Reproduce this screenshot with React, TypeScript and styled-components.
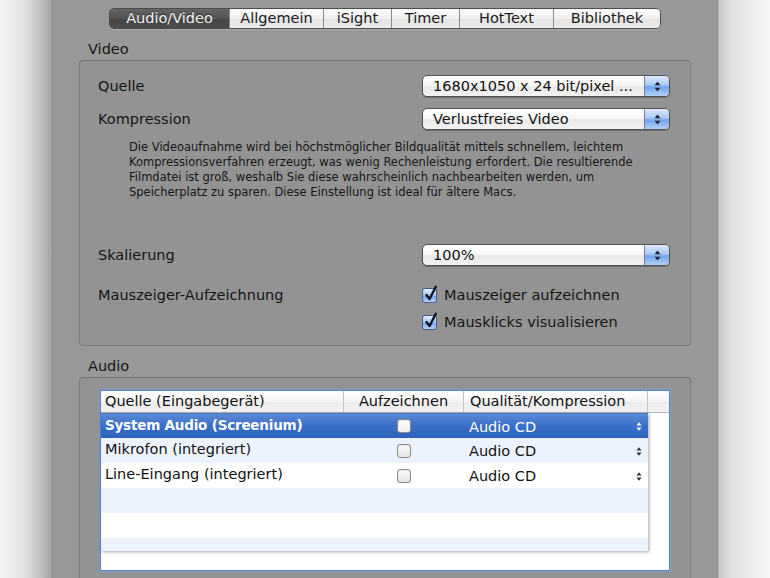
import React from 'react';
import styled, { createGlobalStyle } from 'styled-components';

const GlobalStyle = createGlobalStyle`
  html, body {
    margin: 0;
    height: 100%;
    overflow: hidden;
  }
  body {
    font-family: 'DejaVu Sans', 'Liberation Sans', sans-serif;
    color: #151515;
    background: linear-gradient(
      to right,
      #f4f4f4 0px,
      #e2e2e2 24px,
      #bdbdbd 42px,
      #a2a2a2 52px,
      #9a9a9a 53px,
      #9a9a9a 717px,
      #c6c6c6 719px,
      #e2e2e2 732px,
      #f6f6f6 770px
    );
  }
`;

const Window = styled.div`
  margin: 0 52px;
  height: 578px;
  box-sizing: border-box;
  padding: 8px 26px 0;
  background: #989898;
  border-left: 1px solid #8c8c8c;
  border-right: 1px solid #8c8c8c;
  overflow: hidden;
`;

const TabBar = styled.div`
  width: fit-content;
  margin: 0 auto;
  display: flex;
  height: 21px;
  box-sizing: border-box;
  border: 1px solid #4c4c4c;
  border-radius: 5px;
  overflow: hidden;
  box-shadow: 0 1px 0 rgba(255, 255, 255, 0.18);
`;

const Tab = styled.div<{ $active?: boolean; $w: number }>`
  width: ${({ $w }) => $w}px;
  flex-shrink: 0;
  box-sizing: border-box;
  text-align: center;
  font-size: 14.5px;
  line-height: 19px;
  white-space: nowrap;
  border-left: 1px solid ${({ $active }) => ($active ? '#3a3a3a' : '#8a8a8a')};
  &:first-child {
    border-left: none;
  }
  color: ${({ $active }) => ($active ? '#f4f4f4' : '#1a1a1a')};
  background: ${({ $active }) =>
    $active
      ? 'linear-gradient(#656565, #525252 50%, #444444 51%, #4d4d4d)'
      : 'linear-gradient(#fbfbfb, #efefef 50%, #e3e3e3 51%, #ececec)'};
  text-shadow: ${({ $active }) => ($active ? '0 -1px 0 rgba(0,0,0,0.5)' : 'none')};
`;

const GroupTitle = styled.div<{ $top: number }>`
  margin: ${({ $top }) => $top}px 0 3px 9px;
  font-size: 14.5px;
  line-height: 16px;
`;

const GroupBox = styled.div`
  border: 1px solid #7b7b7b;
  border-top-color: #727272;
  border-radius: 4px;
  background: #939393;
  padding: 14px 20px 14px 18px;
`;

const AudioBox = styled(GroupBox)`
  padding: 12px 20px 0 20px;
  height: 230px;
`;

const FormRow = styled.div<{ $top?: number }>`
  display: grid;
  grid-template-columns: 1fr 248px;
  align-items: center;
  margin-top: ${({ $top }) => $top ?? 0}px;
`;

const CheckRowGrid = styled(FormRow)`
  align-items: start;
`;

const Label = styled.div`
  font-size: 14.5px;
  line-height: 18px;
  white-space: nowrap;
`;

const Popup = styled.div`
  height: 22px;
  box-sizing: border-box;
  display: flex;
  border: 1px solid #505050;
  border-radius: 5px;
  overflow: hidden;
  background: linear-gradient(#ffffff, #f7f7f7 45%, #e9e9e9 55%, #f2f2f2);
  box-shadow: 0 1px 1px rgba(0, 0, 0, 0.25);
`;

const PopupValue = styled.span`
  flex: 1;
  padding-left: 10px;
  font-size: 14.5px;
  line-height: 20px;
  white-space: nowrap;
  overflow: hidden;
  color: #111;
`;

const Stepper = styled.span`
  width: 24px;
  border-left: 1px solid #6f83a6;
  background: linear-gradient(#dde9f9, #abc9f2 45%, #72a3ea 55%, #b4d1f7);
  display: flex;
  align-items: center;
  justify-content: center;
`;

const Description = styled.div`
  margin: 10px 0 0 31px;
  font-size: 11.5px;
  line-height: 15px;
  color: #161616;
`;

const DescLine = styled.span`
  display: block;
  white-space: nowrap;
`;

const CheckList = styled.div`
  display: flex;
  flex-direction: column;
  gap: 9px;
`;

const CheckItem = styled.div`
  display: flex;
  align-items: center;
  gap: 7px;
  height: 18px;
  font-size: 14.5px;
  white-space: nowrap;
`;

const BlueCheck = styled.span`
  position: relative;
  width: 15px;
  height: 15px;
  flex-shrink: 0;
  box-sizing: border-box;
  border: 1px solid #3f5f92;
  border-radius: 3px;
  background: linear-gradient(#e6f0fd, #a6c7f2 50%, #76a6e8 55%, #b9d5f7);
  svg {
    position: absolute;
    left: 1px;
    top: -4px;
  }
`;

const TableFrame = styled.div`
  height: 181px;
  box-sizing: border-box;
  border: 1px solid #5d84c2;
  box-shadow: 0 0 2px 1px rgba(120, 160, 220, 0.75);
  background: #ffffff;
  display: flex;
  flex-direction: column;
`;

const HeaderRow = styled.div`
  display: flex;
  height: 22px;
  flex-shrink: 0;
  box-sizing: border-box;
  border-bottom: 1px solid #b3b3b3;
  background: linear-gradient(#ffffff, #f5f5f5 50%, #ebebeb 51%, #f3f3f3);
`;

const HeaderCell = styled.div<{ $w?: number; $center?: boolean; $pad?: number }>`
  width: ${({ $w }) => ($w ? `${$w}px` : 'auto')};
  flex: ${({ $w }) => ($w ? 'none' : '1')};
  box-sizing: border-box;
  padding-left: ${({ $pad }) => $pad ?? 4}px;
  text-align: ${({ $center }) => ($center ? 'center' : 'left')};
  border-right: 1px solid #c4c4c4;
  font-size: 14.5px;
  line-height: 21px;
  white-space: nowrap;
  color: #111;
  &:last-child {
    border-right: none;
  }
`;

const TableBody = styled.div`
  flex: 1;
  background: #ffffff;
`;

const RowsView = styled.div`
  width: 547px;
  height: 138px;
  overflow: hidden;
  box-shadow: 1px 1px 3px rgba(0, 0, 0, 0.35);
`;

const Row = styled.div<{ $selected?: boolean; $alt?: boolean }>`
  display: grid;
  grid-template-columns: 243px 120px 1fr;
  align-items: center;
  height: 25px;
  font-size: 14.5px;
  color: ${({ $selected }) => ($selected ? '#ffffff' : '#111')};
  background: ${({ $selected, $alt }) =>
    $selected ? 'linear-gradient(#5a89d6, #3a6fc8 50%, #2d62bd)' : $alt ? '#edf3fe' : '#ffffff'};
  border-top: ${({ $selected }) => ($selected ? '1px solid #4a7bc9' : 'none')};
  box-sizing: border-box;
`;

const NameCell = styled.div<{ $selected?: boolean }>`
  padding: 0 0 3px 4px;
  white-space: nowrap;
  line-height: 18px;
  font-weight: ${({ $selected }) => ($selected ? 'bold' : 'normal')};
  font-size: ${({ $selected }) => ($selected ? '13.5px' : '14.5px')};
  letter-spacing: ${({ $selected }) => ($selected ? '-0.2px' : 'normal')};
`;

const CheckCell = styled.div`
  display: flex;
  justify-content: center;
`;

const SmallBox = styled.span<{ $selected?: boolean }>`
  width: 14px;
  height: 14px;
  box-sizing: border-box;
  border: 1px solid #8a8a8a;
  border-radius: 3px;
  background: ${({ $selected }) =>
    $selected ? 'linear-gradient(#ffffff, #eeeeee)' : 'linear-gradient(#fafafa, #e4e4e4)'};
  box-shadow: inset 0 1px 1px rgba(0, 0, 0, 0.08);
`;

const QualityCell = styled.div`
  display: flex;
  align-items: center;
  justify-content: space-between;
  padding: 1px 6px 0 5px;
  line-height: 18px;
`;

const StepArrows = ({ color = '#1b2536', w = 7, h = 11 }: { color?: string; w?: number; h?: number }) => (
  <svg width={w} height={h} viewBox="0 0 7 11">
    <path d="M0.5 4.3 L3.5 0.5 L6.5 4.3 Z" fill={color} />
    <path d="M0.5 6.7 L3.5 10.5 L6.5 6.7 Z" fill={color} />
  </svg>
);

const SelectBox = ({ value }: { value: string }) => (
  <Popup>
    <PopupValue>{value}</PopupValue>
    <Stepper>
      <StepArrows />
    </Stepper>
  </Popup>
);

const Check = ({ label }: { label: string }) => (
  <CheckItem>
    <BlueCheck>
      <svg width="15" height="17" viewBox="0 0 15 17">
        <path d="M2.5 10 L5.6 14 L11.8 1.8" fill="none" stroke="#0e1420" strokeWidth="2.4" strokeLinecap="round" strokeLinejoin="round" />
      </svg>
    </BlueCheck>
    <span>{label}</span>
  </CheckItem>
);

const tabs = [
  { name: 'Audio/Video', w: 119, active: true },
  { name: 'Allgemein', w: 94 },
  { name: 'iSight', w: 68 },
  { name: 'Timer', w: 68 },
  { name: 'HotText', w: 94 },
  { name: 'Bibliothek', w: 107 },
];

const sources = ['System Audio (Screenium)', 'Mikrofon (integriert)', 'Line-Eingang (integriert)', '', '', ''];

export default function App() {
  return (
    <>
      <GlobalStyle />
      <Window>
        <TabBar>
          {tabs.map((t) => (
            <Tab key={t.name} $w={t.w} $active={t.active}>
              {t.name}
            </Tab>
          ))}
        </TabBar>

        <GroupTitle $top={12}>Video</GroupTitle>
        <GroupBox>
          <FormRow>
            <Label>Quelle</Label>
            <SelectBox value="1680x1050 x 24 bit/pixel ..." />
          </FormRow>
          <FormRow $top={11}>
            <Label>Kompression</Label>
            <SelectBox value="Verlustfreies Video" />
          </FormRow>
          <Description>
            <DescLine>Die Videoaufnahme wird bei höchstmöglicher Bildqualität mittels schnellem, leichtem</DescLine>
            <DescLine>Kompressionsverfahren erzeugt, was wenig Rechenleistung erfordert. Die resultierende</DescLine>
            <DescLine>Filmdatei ist groß, weshalb Sie diese wahrscheinlich nachbearbeiten werden, um</DescLine>
            <DescLine>Speicherplatz zu sparen. Diese Einstellung ist ideal für ältere Macs.</DescLine>
          </Description>
          <FormRow $top={44}>
            <Label>Skalierung</Label>
            <SelectBox value="100%" />
          </FormRow>
          <CheckRowGrid $top={20}>
            <Label>Mauszeiger-Aufzeichnung</Label>
            <CheckList>
              <Check label="Mauszeiger aufzeichnen" />
              <Check label="Mausklicks visualisieren" />
            </CheckList>
          </CheckRowGrid>
        </GroupBox>

        <GroupTitle $top={12}>Audio</GroupTitle>
        <AudioBox>
          <TableFrame>
            <HeaderRow>
              <HeaderCell $w={243}>Quelle (Eingabegerät)</HeaderCell>
              <HeaderCell $w={120} $center $pad={0}>
                Aufzeichnen
              </HeaderCell>
              <HeaderCell $w={184} $pad={6}>
                Qualität/Kompression
              </HeaderCell>
              <HeaderCell />
            </HeaderRow>
            <TableBody>
              <RowsView>
                {sources.map((name, i) => (
                  <Row key={i} $selected={i === 0} $alt={i % 2 === 1}>
                    <NameCell $selected={i === 0}>{name}</NameCell>
                    <CheckCell>{name && <SmallBox $selected={i === 0} />}</CheckCell>
                    <QualityCell>
                      {name && (
                        <>
                          <span>Audio CD</span>
                          <StepArrows color={i === 0 ? '#ffffff' : '#333333'} w={6} h={11} />
                        </>
                      )}
                    </QualityCell>
                  </Row>
                ))}
              </RowsView>
            </TableBody>
          </TableFrame>
        </AudioBox>
      </Window>
    </>
  );
}
